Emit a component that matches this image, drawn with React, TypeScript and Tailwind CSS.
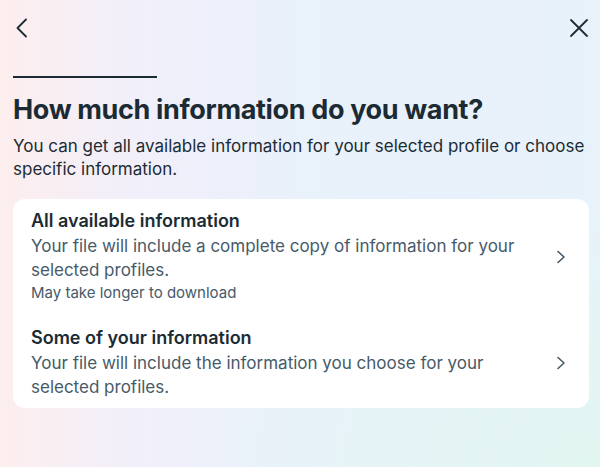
import React from "react";

const font = { fontFamily: "Inter, 'Noto Sans', sans-serif" };

function Chevron() {
  return (
    <svg width="12" height="14" viewBox="0 0 12 14" fill="none" className="shrink-0">
      <path d="M3 1.5 L9 7 L3 12.5" stroke="#465a69" strokeWidth="1.6" strokeLinecap="round" strokeLinejoin="round" />
    </svg>
  );
}

export default function App() {
  return (
    <div
      className="w-[600px] h-[467px] overflow-hidden text-[#1c2b33] bg-[radial-gradient(ellipse_70%_60%_at_100%_100%,#e2f6f1_0%,transparent_100%),linear-gradient(90deg,#fdeeee_0%,#f1effa_22%,#e9f1fb_50%,#e8f2fb_100%)]"
      style={font}
    >
      <div className="flex items-center justify-between pl-[15px] pr-[10px] pt-[17px]">
        <svg width="14" height="20" viewBox="0 0 14 20" fill="none">
          <path d="M11 1.5 L2.5 10 L11 18.5" stroke="#1c2b33" strokeWidth="1.8" strokeLinecap="round" strokeLinejoin="round" />
        </svg>
        <svg width="22" height="22" viewBox="0 0 22 22" fill="none">
          <path d="M3 3 L19 19 M19 3 L3 19" stroke="#1c2b33" strokeWidth="1.8" strokeLinecap="round" />
        </svg>
      </div>
      <div className="pl-[13px] pr-[11px]">
        <div className="mt-[37px] h-[2px] w-[144px] bg-[#1c2b33]" />
        <h1 className="mt-[16px] text-[27px] leading-[32px] font-bold tracking-[-0.35px]">How much information do you want?</h1>
        <p className="mt-[9px] text-[17px] leading-[23px] text-[#1c2b33]">
          You can get all available information for your selected profile or choose specific information.
        </p>
        <div className="mt-[18px] rounded-[12px] bg-white">
          <div className="flex items-center pl-[18px] pr-[22px] pt-[10px] pb-[8px]">
            <div className="flex-1">
              <div className="text-[18px] leading-[24px] font-semibold">All available information</div>
              <div className="text-[17px] leading-[24px] text-[#465a69] mt-[1px]">
                Your file will include a complete copy of information for your selected profiles.
              </div>
              <div className="text-[15px] leading-[22px] text-[#465a69]">May take longer to download</div>
            </div>
            <Chevron />
          </div>
          <div className="flex items-center pl-[18px] pr-[22px] pt-[14px] pb-[9px]">
            <div className="flex-1">
              <div className="text-[18px] leading-[24px] font-semibold">Some of your information</div>
              <div className="text-[17px] leading-[24px] text-[#465a69] mt-[1px]">
                Your file will include the information you choose for your selected profiles.
              </div>
            </div>
            <Chevron />
          </div>
        </div>
      </div>
    </div>
  );
}
